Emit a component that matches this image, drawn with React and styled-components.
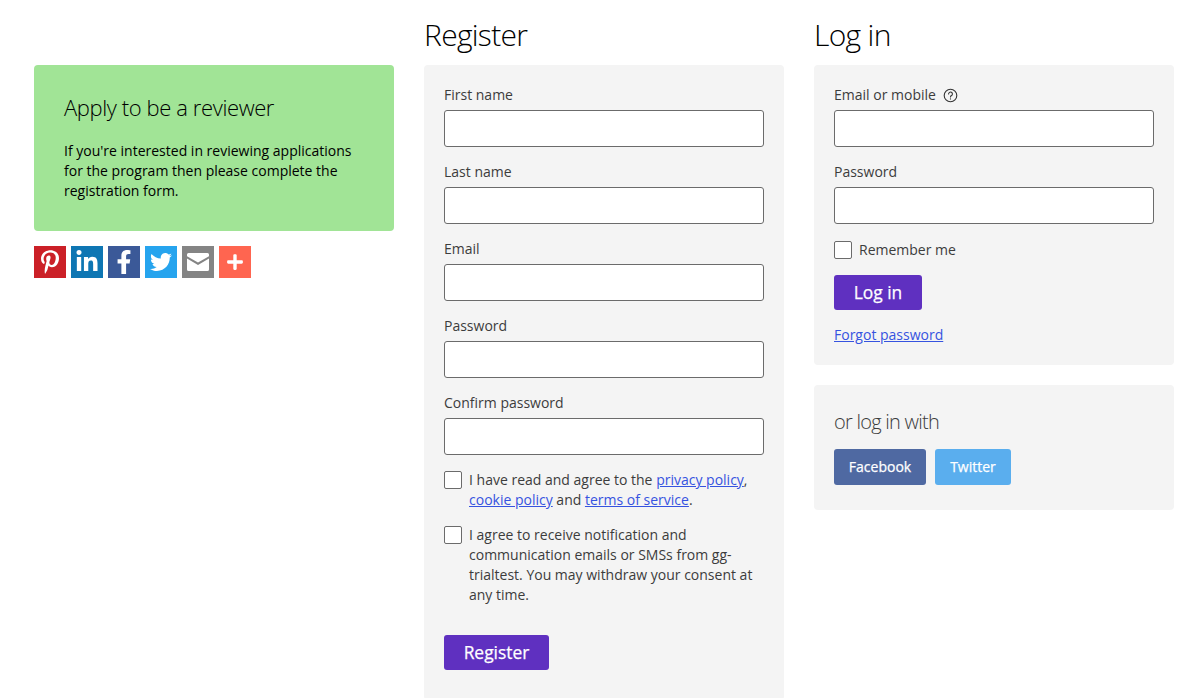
import React from "react";
import styled, { createGlobalStyle } from "styled-components";
import { FaPinterestP, FaLinkedinIn, FaFacebookF, FaTwitter, FaPlus } from "react-icons/fa";

const Global = createGlobalStyle`
  html, body { margin: 0; padding: 0; background: #fff; }
  body { font-family: "Open Sans", "Liberation Sans", sans-serif; font-size: 14px; line-height: 20px; color: #3c3c3c; overflow-x: hidden; }
  * { box-sizing: border-box; }
`;
const Page = styled.div`
  display: grid;
  grid-template-columns: repeat(3, 360px);
  column-gap: 30px;
  padding: 0 22px 0 34px;
`;
const Column = styled.div`
  display: flex;
  flex-direction: column;
`;
const Heading = styled.h1`
  margin: 0;
  height: 65px;
  padding-top: 14px;
  font-size: 30px;
  line-height: 42px;
  font-weight: 300;
  letter-spacing: -0.7px;
  color: #000;
`;
const Spacer = styled.div`
  height: 65px;
`;
const Panel = styled.section`
  background: #f4f4f4;
  border-radius: 4px;
  padding: ${(p) => p.$padding || "20px"};
  margin-bottom: ${(p) => p.$mb || "0"};
`;
const Promo = styled.section`
  background: #a1e496;
  border-radius: 4px;
  padding: 27px 30px 30px;
  height: 166px;
  color: #000;
`;
const PromoTitle = styled.h2`
  margin: 0 0 19px;
  font-size: 22px;
  line-height: 30px;
  font-weight: 300;
  letter-spacing: -0.4px;
`;
const PromoText = styled.p`
  margin: 0;
`;
const Share = styled.div`
  display: flex;
  gap: 5px;
  margin-top: 15px;
`;
const ShareBtn = styled.a`
  width: 32px;
  height: 32px;
  display: flex;
  align-items: center;
  justify-content: center;
  background: ${(p) => p.$bg};
  color: #fff;
  font-size: ${(p) => p.$size || 24}px;
`;
const Field = styled.div`
  margin-bottom: ${(p) => p.$mb || "15px"};
`;
const Label = styled.label`
  display: flex;
  align-items: center;
  gap: 7px;
  height: 20px;
  margin-bottom: 5px;
`;
const Input = styled.input`
  display: block;
  width: 100%;
  height: 37px;
  background: #fff;
  border: 1px solid #6b6b6b;
  border-radius: 3px;
  padding: 0 8px;
`;
const CheckRow = styled.div`
  display: flex;
  gap: 7px;
  margin-bottom: ${(p) => p.$mb || "15px"};
`;
const Box = styled.span`
  flex: none;
  width: 18px;
  height: 18px;
  margin-top: 1px;
  background: #fff;
  border: 1px solid #6b6b6b;
  border-radius: 2px;
`;
const Link = styled.a`
  color: #3653e0;
  text-decoration: underline;
`;
const Primary = styled.button`
  display: block;
  width: ${(p) => p.$width}px;
  height: 35px;
  padding: 0;
  border: 0;
  border-radius: 3px;
  background: #5f30c0;
  color: #fff;
  font: 400 17.4px/35px "Open Sans", "Liberation Sans", sans-serif;
  -webkit-text-stroke: 0.25px #fff;
`;
const SubTitle = styled.h2`
  margin: 0 0 10px;
  font-size: 20px;
  line-height: 34px;
  font-weight: 300;
  letter-spacing: -0.75px;
`;
const Socials = styled.div`
  display: flex;
  gap: 9px;
`;
const SocialBtn = styled.button`
  width: ${(p) => p.$width}px;
  height: 36px;
  padding: 0;
  border: 0;
  border-radius: 3px;
  background: ${(p) => p.$bg};
  color: #fff;
  font: 400 14px/36px "Open Sans", "Liberation Sans", sans-serif;
  -webkit-text-stroke: 0.25px #fff;
`;
const ForgotRow = styled.div`
  margin-top: 15px;
`;

const Help = () => (
  <svg width="15" height="15" viewBox="0 0 15 15" fill="none" stroke="#333" strokeWidth="1.1">
    <circle cx="7.5" cy="7.5" r="6.3" />
    <path d="M5.6 6a1.9 1.9 0 1 1 2.9 1.6c-.7.4-1 .7-1 1.4" strokeLinecap="round" />
    <circle cx="7.5" cy="10.9" r=".6" fill="#333" stroke="none" />
  </svg>
);
const Mail = () => (
  <svg width="22" height="18" viewBox="0 0 22 18" fill="#fff">
    <path d="M1.5 0h19A1.5 1.5 0 0 1 22 1.5v1.8L11 9.6 0 3.3V1.5A1.5 1.5 0 0 1 1.5 0z" />
    <path d="M0 5.6l11 6.3 11-6.3v10.8a1.6 1.6 0 0 1-1.6 1.6H1.6A1.6 1.6 0 0 1 0 16.4z" />
  </svg>
);

export default function App() {
  return (
    <>
      <Global />
      <Page>
        <Column>
          <Spacer />
          <Promo>
            <PromoTitle>Apply to be a reviewer</PromoTitle>
            <PromoText>
              If you're interested in reviewing applications for the program then please complete the registration form.
            </PromoText>
          </Promo>
          <Share>
            <ShareBtn $bg="#cb2027"><FaPinterestP /></ShareBtn>
            <ShareBtn $bg="#0e76b3"><FaLinkedinIn /></ShareBtn>
            <ShareBtn $bg="#3b5998"><FaFacebookF /></ShareBtn>
            <ShareBtn $bg="#26a4ee" $size={22}><FaTwitter /></ShareBtn>
            <ShareBtn $bg="#848484"><Mail /></ShareBtn>
            <ShareBtn $bg="#ff6550" $size={18}><FaPlus /></ShareBtn>
          </Share>
        </Column>
        <Column>
          <Heading>Register</Heading>
          <Panel $padding="20px 20px 30px">
            <Field><Label>First name</Label><Input /></Field>
            <Field><Label>Last name</Label><Input /></Field>
            <Field><Label>Email</Label><Input /></Field>
            <Field><Label>Password</Label><Input type="password" /></Field>
            <Field><Label>Confirm password</Label><Input type="password" /></Field>
            <CheckRow>
              <Box />
              <span>
                I have read and agree to the <Link href="#">privacy policy</Link>, <Link href="#">cookie policy</Link> and <Link href="#">terms of service</Link>.
              </span>
            </CheckRow>
            <CheckRow $mb="30px">
              <Box />
              <span>I agree to receive notification and communication emails or SMSs from gg-trialtest. You may withdraw your consent at any time.</span>
            </CheckRow>
            <Primary $width={105}>Register</Primary>
          </Panel>
        </Column>
        <Column>
          <Heading>Log in</Heading>
          <Panel $mb="20px">
            <Field><Label>Email or mobile <Help /></Label><Input /></Field>
            <Field $mb="16px"><Label>Password</Label><Input type="password" /></Field>
            <CheckRow>
              <Box />
              <span>Remember me</span>
            </CheckRow>
            <Primary $width={88}>Log in</Primary>
            <ForgotRow><Link href="#">Forgot password</Link></ForgotRow>
          </Panel>
          <Panel $padding="20px 20px 25px">
            <SubTitle>or log in with</SubTitle>
            <Socials>
              <SocialBtn $bg="#4f69a2" $width={92}>Facebook</SocialBtn>
              <SocialBtn $bg="#5aaeee" $width={76}>Twitter</SocialBtn>
            </Socials>
          </Panel>
        </Column>
      </Page>
    </>
  );
}
